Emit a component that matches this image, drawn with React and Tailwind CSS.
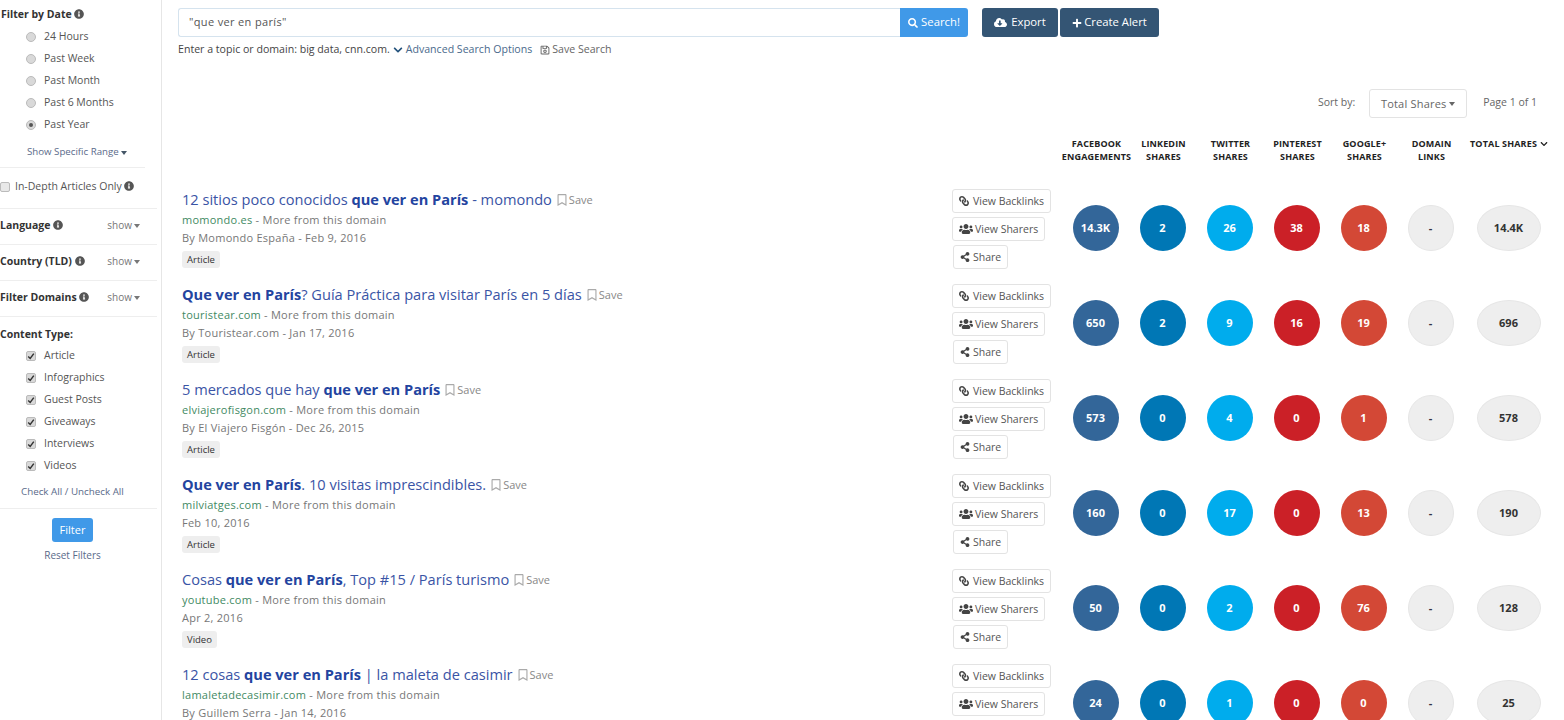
import React from "react";
import { FaInfoCircle, FaChevronDown, FaSearch, FaCloudDownloadAlt, FaPlus, FaLink, FaUsers, FaShareAlt, FaRegBookmark, FaRegSave } from "react-icons/fa";

const Caret = ({ className = "" }) => (
  <span className={`inline-block w-0 h-0 border-x-[3.5px] border-x-transparent border-t-[4px] border-t-current align-middle ${className}`} />
);
const Info = () => <FaInfoCircle className="inline-block text-[10px] text-[#555] align-[-1px]" />;

const dates = [["24 Hours", false], ["Past Week", false], ["Past Month", false], ["Past 6 Months", false], ["Past Year", true]];
const types = ["Article", "Infographics", "Guest Posts", "Giveaways", "Interviews", "Videos"];

const B = ({ children }) => <b className="font-bold text-[#23449f]">{children}</b>;

const rows = [
  { title: <>12 sitios poco conocidos <B>que ver en París</B> - momondo</>, domain: "momondo.es", by: "By Momondo España - Feb 9, 2016", tag: "Article", v: ["14.3K", "2", "26", "38", "18", "-", "14.4K"] },
  { title: <><B>Que ver en París</B>? Guía Práctica para visitar París en 5 días</>, domain: "touristear.com", by: "By Touristear.com - Jan 17, 2016", tag: "Article", v: ["650", "2", "9", "16", "19", "-", "696"] },
  { title: <>5 mercados que hay <B>que ver en París</B></>, domain: "elviajerofisgon.com", by: "By El Viajero Fisgón - Dec 26, 2015", tag: "Article", v: ["573", "0", "4", "0", "1", "-", "578"] },
  { title: <><B>Que ver en París</B>. 10 visitas imprescindibles.</>, domain: "milviatges.com", by: "Feb 10, 2016", tag: "Article", v: ["160", "0", "17", "0", "13", "-", "190"] },
  { title: <>Cosas <B>que ver en París</B>, Top #15 / París turismo</>, domain: "youtube.com", by: "Apr 2, 2016", tag: "Video", v: ["50", "0", "2", "0", "76", "-", "128"] },
  { title: <>12 cosas <B>que ver en París</B> | la maleta de casimir</>, domain: "lamaletadecasimir.com", by: "By Guillem Serra - Jan 14, 2016", tag: "Article", v: ["24", "0", "1", "0", "0", "-", "25"] },
];

const headers = [["FACEBOOK", "ENGAGEMENTS"], ["LINKEDIN", "SHARES"], ["TWITTER", "SHARES"], ["PINTEREST", "SHARES"], ["GOOGLE+", "SHARES"], ["DOMAIN", "LINKS"]];

const SmallBtn = ({ icon, children, className = "" }) => (
  <div className={`w-fit h-[24px] flex items-center px-[6px] bg-white border border-[#e3e3e3] rounded-[3px] text-[10.5px] text-[#555] whitespace-nowrap ${className}`}>
    {icon}
    <span className="pt-[1px]">{children}</span>
  </div>
);

const Circle = ({ value, className }) => (
  <div className="w-[67px] flex justify-center">
    <div className={`w-[46px] h-[46px] rounded-full flex items-center justify-center text-[11px] font-bold ${className}`}>{value}</div>
  </div>
);

const Row = ({ r }) => (
  <div className="h-[95px] flex">
    <div className="w-[790px] pl-[20px] shrink-0">
      <div className="h-[20px] mt-[10px] flex items-center whitespace-nowrap">
        <span className="text-[14.6px] text-[#3a54a5]">{r.title}</span>
        <FaRegBookmark className="ml-[4px] text-[12px] text-[#aaa]" />
        <span className="ml-[1px] pt-[1px] text-[11px] text-[#888]">Save</span>
      </div>
      <div className="h-[18px] mt-[1px] flex items-center text-[11px] text-[#777] tracking-[0.25px]">
        <span className="text-[#3f8a63]">{r.domain}</span>
        <span>&nbsp;- More from this domain</span>
      </div>
      <div className="h-[18px] flex items-center text-[11px] text-[#777] tracking-[0.25px]">{r.by}</div>
      <div className="mt-[4px] w-fit h-[17px] pt-[1px] px-[5px] flex items-center rounded-[3px] bg-[#eeeeee] text-[9.5px] text-[#333]">{r.tag}</div>
    </div>
    <div className="w-[110px] shrink-0 pt-[9px] flex flex-col gap-[4px]">
      <SmallBtn icon={<FaLink className="mr-[4px] text-[10px] text-[#444] -scale-x-100" />}>View Backlinks</SmallBtn>
      <SmallBtn icon={<FaUsers className="mr-[2px] text-[14px] text-[#444]" />}>View Sharers</SmallBtn>
      <SmallBtn className="ml-px" icon={<FaShareAlt className="mr-[3px] text-[10px] text-[#444]" />}>Share</SmallBtn>
    </div>
    <div className="flex pt-[25px] items-start">
      <Circle value={r.v[0]} className="bg-[#369] text-white" />
      <Circle value={r.v[1]} className="bg-[#0077b5] text-white" />
      <Circle value={r.v[2]} className="bg-[#00aced] text-white" />
      <Circle value={r.v[3]} className="bg-[#cb2027] text-white" />
      <Circle value={r.v[4]} className="bg-[#d34836] text-white" />
      <Circle value={r.v[5]} className="bg-[#eeeeee] border border-[#e6e6e6] text-[#334]" />
      <div className="w-[89px] flex justify-center">
        <div className="w-[64px] h-[46px] rounded-[50%] flex items-center justify-center text-[11px] font-bold bg-[#eeeeee] border border-[#e6e6e6] text-[#333]">{r.v[6]}</div>
      </div>
    </div>
  </div>
);

const Section = ({ label }) => (
  <div className="h-[36px] pb-[2px] border-t border-[#eeeeee] flex items-center justify-between pr-[17px] w-[157px]">
    <span className="text-[10.5px] font-bold text-[#333] whitespace-nowrap">{label} <Info /></span>
    <span className="text-[10px] text-[#777] flex items-center gap-[2px]">show <Caret /></span>
  </div>
);

const Radio = ({ on }) => (
  <span className="w-[10px] h-[10px] rounded-full bg-[#d9d9d9] border border-[#bbb] flex items-center justify-center shrink-0">
    {on && <span className="w-[4px] h-[4px] rounded-full bg-[#555]" />}
  </span>
);
const Check = () => (
  <span className="w-[10px] h-[10px] rounded-[2px] bg-[#d9d9d9] border border-[#bbb] flex items-center justify-center shrink-0">
    <svg viewBox="0 0 10 10" className="w-[8px] h-[8px]"><path d="M1.5 5.5 L4 8 L8.5 2" fill="none" stroke="#333" strokeWidth="1.8" /></svg>
  </span>
);

export default function App() {
  return (
    <div className="h-screen overflow-hidden flex bg-white text-[#555]" style={{ fontFamily: '"Open Sans", sans-serif' }}>
      <aside className="w-[162px] shrink-0 border-r border-[#e6e6e6] h-full">
        <div className="h-[26px] pt-[6px] text-[10.5px] font-bold text-[#333] leading-[16px] pl-px">Filter by Date <Info /></div>
        <div className="pl-[26px]">
          {dates.map(([d, on]) => (
            <div key={d} className="h-[22px] flex items-center gap-[8px] text-[10.5px] text-[#555]"><Radio on={on} /><span>{d}</span></div>
          ))}
        </div>
        <div className="h-[31px] pt-[2px] pl-[27px] flex items-center gap-[2px] text-[9.7px] text-[#5a6a8a]"><span>Show Specific Range</span> <Caret className="text-[#456]" /></div>
        <div className="w-[145px] border-t border-[#eeeeee]" />
        <div className="h-[40px] pb-[3px] flex items-center gap-[5px] text-[10.5px] text-[#555] whitespace-nowrap">
          <span className="w-[10px] h-[10px] rounded-[2px] bg-[#e8e8e8] border border-[#bbb] shrink-0" />
          <span>In-Depth Articles Only <Info /></span>
        </div>
        <Section label="Language" />
        <Section label="Country (TLD)" />
        <Section label="Filter Domains" />
        <div className="w-[157px] border-t border-[#eeeeee] h-[29px] pt-[9px] text-[10.5px] font-bold text-[#333] leading-[16px]">Content Type:</div>
        <div className="pl-[26px]">
          {types.map((t) => (
            <div key={t} className="h-[22px] flex items-center gap-[8px] text-[10.5px] text-[#555]"><Check /><span>{t}</span></div>
          ))}
        </div>
        <div className="h-[30px] mb-[1px] pl-[21px] flex items-center text-[9.8px] text-[#5a6a8a]">Check All / Uncheck All</div>
        <div className="w-[157px] border-t border-[#eeeeee] pt-[9px] flex flex-col items-center pr-[12px]">
          <div className="w-[41px] h-[24px] rounded-[3px] bg-[#4099e8] text-white text-[11px] flex items-center justify-center">Filter</div>
          <div className="mt-[6px] text-[10px] text-[#5a6a8a]">Reset Filters</div>
        </div>
      </aside>

      <main className="flex-1 min-w-0">
        <div className="h-[89px] pl-[16px] pt-[8px]">
          <div className="flex items-start">
            <div className="w-[722px] h-[29px] border border-[#d5e3ee] border-r-0 rounded-l-[3px] px-[10px] flex items-center text-[11px] tracking-[0.35px] text-[#555]">"que ver en parís"</div>
            <div className="w-[68px] h-[29px] rounded-r-[3px] bg-[#4099e8] text-white text-[11.3px] flex items-center justify-center gap-[3px]"><FaSearch className="text-[10px]" />Search!</div>
            <div className="ml-[14px] w-[76px] h-[29px] rounded-[3px] bg-[#345574] text-white text-[11.3px] flex items-center justify-center gap-[4px]"><FaCloudDownloadAlt className="text-[13px]" />Export</div>
            <div className="ml-[2px] w-[99px] h-[29px] rounded-[3px] bg-[#345574] text-white text-[11.3px] flex items-center justify-center gap-[2px]"><FaPlus className="text-[10px]" />Create Alert</div>
          </div>
          <div className="mt-[6px] flex items-center text-[10.6px] h-[14px] whitespace-nowrap text-[#444]">
            <span>Enter a topic or domain: big data, cnn.com.</span>
            <FaChevronDown className="ml-[3px] mr-[3px] text-[10px] text-[#23527c]" />
            <span className="text-[#4a6a8c]">Advanced Search Options</span>
            <FaRegSave className="ml-[8px] mr-[2px] text-[10px] text-[#666]" />
            <span className="text-[#666]">Save Search</span>
          </div>
        </div>

        <div className="h-[46px] flex items-start justify-end pr-[27px] text-[10.5px] text-[#666]">
          <span className="mt-[6px]">Sort by:</span>
          <div className="ml-[14px] w-[98px] h-[29px] pt-[1px] border border-[#e3e3e3] rounded-[3px] flex items-center justify-center gap-[3px] text-[11px] tracking-[0.2px]">Total Shares <Caret /></div>
          <span className="ml-[16px] mt-[6px]">Page 1 of 1</span>
        </div>

        <div className="h-[45px] pt-[2px] flex pl-[901px] text-[9px] font-bold text-[#222] leading-[13px] text-center tracking-[0.15px]">
          {headers.map(([a, b]) => (
            <div key={a} className="w-[67px] whitespace-nowrap flex flex-col items-center"><span>{a}</span><span>{b}</span></div>
          ))}
          <div className="w-[88px] whitespace-nowrap flex items-start justify-center gap-[3px]"><span>TOTAL SHARES</span><FaChevronDown className="mt-[3px] text-[8px]" /></div>
        </div>

        <div>
          {rows.map((r, i) => <Row key={i} r={r} />)}
        </div>
      </main>
    </div>
  );
}
